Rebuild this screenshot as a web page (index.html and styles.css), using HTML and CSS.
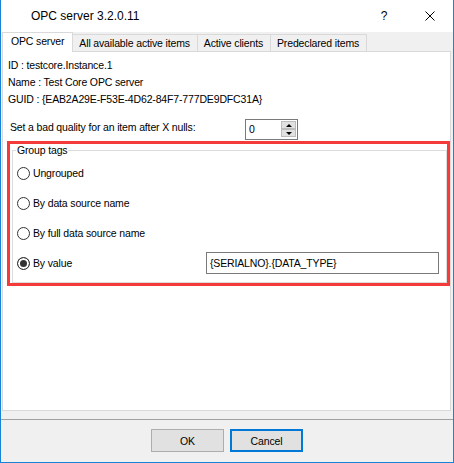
FILE: index.html
```html
<!DOCTYPE html>
<html><head>
<meta http-equiv="Content-Type" content="text/html; charset=utf-8">
<title>OPC server 3.2.0.11</title>
<link rel="stylesheet" href="styles.css"></head>

<body>
<div class="window">
	<div class="titlebar">
		<span class="title">OPC server 3.2.0.11</span>
		<span class="caption-btn">?</span>
		<span class="caption-btn">
			<svg width="10" height="10" viewBox="0 0 10 10"><path d="M0.5 0.5 L9.5 9.5 M9.5 0.5 L0.5 9.5" stroke="#000" stroke-width="1" fill="none"/></svg>
		</span>
	</div>

	<div class="tabs">
		<div class="tab active">OPC server</div>
		<div class="tab">All available active items</div>
		<div class="tab">Active clients</div>
		<div class="tab">Predeclared items</div>
	</div>

	<div class="panel">
		<div class="info">
			<div>ID : testcore.Instance.1</div>
			<div>Name : Test Core OPC server</div>
			<div>GUID : {EAB2A29E-F53E-4D62-84F7-777DE9DFC31A}</div>
		</div>

		<div class="quality-row">
			<span class="quality-label">Set a bad quality for an item after X nulls:</span>
			<div class="spin">
				<span class="spin-value">0</span>
				<div class="spin-btns">
					<span class="spin-btn"><span class="arrow-up"></span></span>
					<span class="spin-btn"><span class="arrow-down"></span></span>
				</div>
			</div>
		</div>

		<div class="highlight">
			<fieldset class="group">
				<legend>Group tags</legend>
				<div class="radio-row"><span class="radio"></span>Ungrouped</div>
				<div class="radio-row"><span class="radio"></span>By data source name</div>
				<div class="radio-row"><span class="radio"></span>By full data source name</div>
				<div class="radio-row"><span class="radio checked"></span>By value
					<span class="textbox">{SERIALNO}.{DATA_TYPE}</span>
				</div>
			</fieldset>
		</div>
	</div>

	<div class="footer">
		<div class="separator"></div>
		<div class="buttons">
			<button class="btn">OK</button>
			<button class="btn default">Cancel</button>
		</div>
	</div>
</div>
</body>
</html>
```

FILE: styles.css
```css
/* whole page is the dialog window */
body {
	margin: 0;
	font-family: "Liberation Sans", Arial, sans-serif;
	font-size: 10.5px;
	letter-spacing: -0.15px;
	color: #000;
}

.window {
	width: 454px;
	height: 463px;
	box-sizing: border-box;
	border: 1px solid #1883d7;
	border-top: none;
	background-color: #f0f0f0;
	display: flex;
	flex-direction: column;
}

/* title bar */
.titlebar {
	height: 32px;
	background-color: #ffffff;
	display: flex;
	align-items: center;
	font-size: 12px;
	letter-spacing: 0;
}
.title {
	flex: 1;
	padding-left: 30px;
}
.caption-btn {
	width: 46px;
	height: 32px;
	display: flex;
	align-items: center;
	justify-content: center;
}

/* tab strip */
.tabs {
	height: 19px;
	margin-left: 1px;
	display: flex;
	align-items: flex-end;
}
.tab {
	height: 17px;
	box-sizing: border-box;
	border: 1px solid #d9d9d9;
	border-bottom: none;
	margin-left: -1px;
	padding: 0 7px 0 6px;
	line-height: 16px;
	white-space: nowrap;
}
.tab.active {
	height: 20px;
	margin-left: 0;
	margin-bottom: -1px;
	padding: 0 8px;
	line-height: 17px;
	background-color: #ffffff;
	position: relative;
	z-index: 1;
}

.panel {
	height: 360px;
	box-sizing: border-box;
	margin: 0 2px 0 1px;
	padding-top: 5px;
	border: 1px solid #d9d9d9;
	background-color: #ffffff;
}
.info {
	padding-left: 5px;
	line-height: 17px;
}

.quality-row {
	display: flex;
	align-items: flex-start;
	margin-top: 11px;
	padding-left: 7px;
	line-height: 17px;
}
.quality-label {
	width: 235px;
}
.spin {
	width: 53px;
	height: 21px;
	box-sizing: border-box;
	border: 1px solid #7a7a7a;
	display: flex;
	justify-content: space-between;
}
.spin-value {
	padding-left: 3px;
	line-height: 19px;
}
.spin-btns {
	display: flex;
	flex-direction: column;
	padding: 1px 1px 0 0;
}
.spin-btn {
	width: 15px;
	height: 8px;
	box-sizing: border-box;
	border: 1px solid #bcbcbc;
	background-color: #e1e1e1;
	display: flex;
	align-items: center;
	justify-content: center;
}
.arrow-up, .arrow-down {
	width: 0;
	height: 0;
	border-left: 3px solid transparent;
	border-right: 3px solid transparent;
}
.arrow-up { border-bottom: 3px solid #000; }
.arrow-down { border-top: 3px solid #000; }

/* red frame around the group box */
.highlight {
	margin: 1px 0 0 4px;
	border: 3px solid #f53a3a;
	padding-left: 2px;
}
.group {
	margin: 0;
	border: 1px solid #dcdcdc;
	padding: 0 7px 9px 4px;
}
.group legend {
	padding: 0 1px;
	margin-left: -1px;
	line-height: 12px;
}
.radio-row {
	height: 20px;
	display: flex;
	align-items: center;
	margin-top: 10px;
}
.radio-row:first-of-type {
	margin-top: 7px;
}
.radio {
	width: 13px;
	height: 13px;
	box-sizing: border-box;
	border: 1px solid #333333;
	border-radius: 50%;
	background-color: #ffffff;
	margin-right: 3px;
}
.radio.checked {
	background-color: #333333;
	box-shadow: inset 0 0 0 2px #ffffff;
}
.textbox {
	width: 233px;
	height: 22px;
	box-sizing: border-box;
	margin-left: auto;
	padding-left: 3px;
	border: 1px solid #7a7a7a;
	display: flex;
	align-items: center;
}

/* bottom buttons */
.footer {
	padding-top: 8px;
}
.separator {
	height: 1px;
	background-color: #a0a0a0;
}
.buttons {
	display: flex;
	gap: 6px;
	margin-top: 9px;
	padding-left: 150px;
}
.btn {
	width: 73px;
	height: 23px;
	box-sizing: border-box;
	border: 1px solid #adadad;
	background-color: #e1e1e1;
	font-family: "Liberation Sans", Arial, sans-serif;
	font-size: 10.5px;
	letter-spacing: -0.15px;
	color: #000;
	padding: 0;
}
.btn.default {
	border: 2px solid #0078d7;
}
```
